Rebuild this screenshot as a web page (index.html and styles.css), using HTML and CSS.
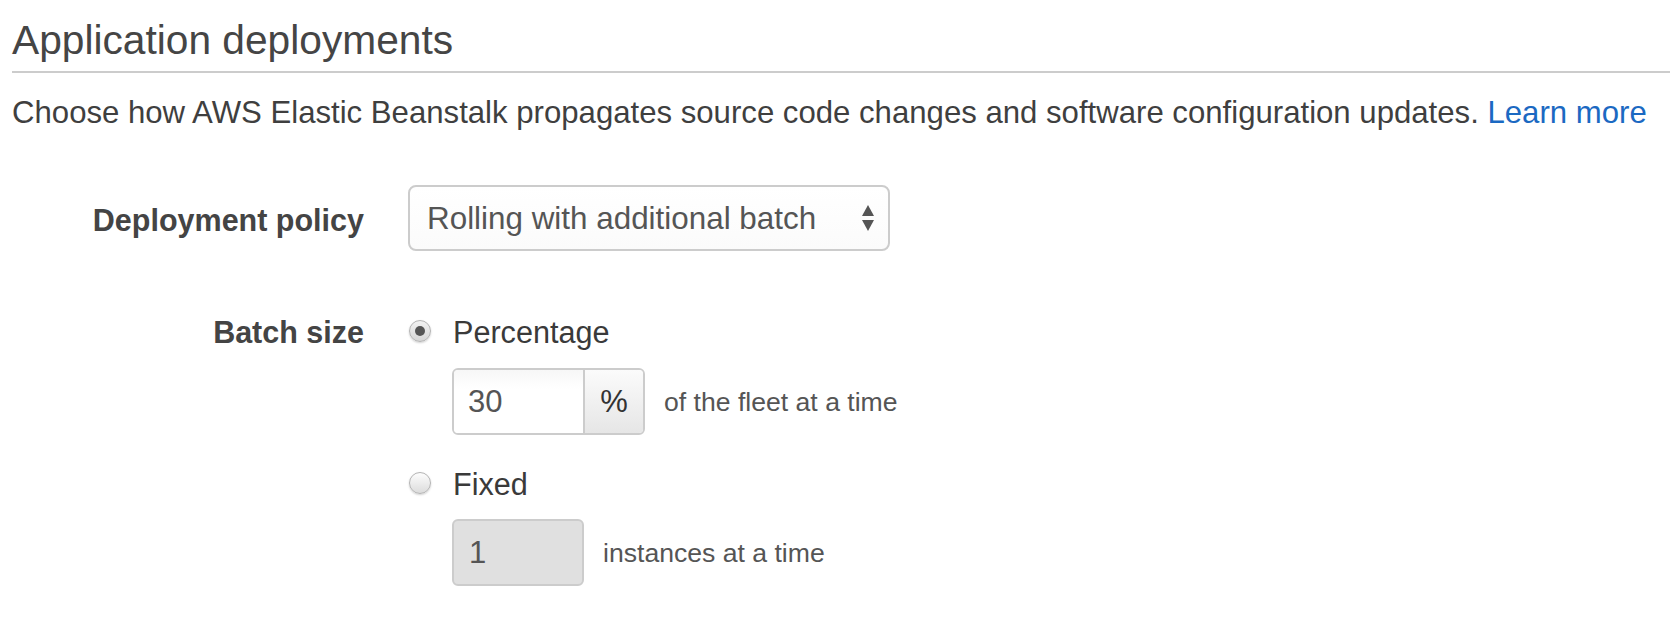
FILE: index.html
```html
<!DOCTYPE html>
<html lang="en">
<head>
<meta charset="utf-8">
<title>Application deployments</title>
<link rel="stylesheet" href="styles.css">
</head>
<body>
<div class="page">
  <h1 class="title">Application deployments</h1>
  <p class="desc">Choose how AWS Elastic Beanstalk propagates source code changes and software configuration updates. <a class="link" href="#">Learn more</a></p>

  <div class="form">
    <div class="row row-policy">
      <div class="label">Deployment policy</div>
      <div class="control">
        <div class="select">
          <span class="select-text">Rolling with additional batch</span>
          <svg class="select-arrows" width="14" height="28" viewBox="0 0 14 28">
            <path d="M7 1 L13 12 L1 12 Z" fill="#555"/>
            <path d="M1 16 L13 16 L7 27 Z" fill="#555"/>
          </svg>
        </div>
      </div>
    </div>

    <div class="row row-batch">
      <div class="label">Batch size</div>
      <div class="control">
        <div class="option">
          <span class="radio checked"><span class="dot"></span></span>
          <span class="option-text">Percentage</span>
        </div>
        <div class="field-line">
          <div class="group">
            <div class="input input-pct">30</div>
            <div class="addon">%</div>
          </div>
          <span class="hint">of the fleet at a time</span>
        </div>
        <div class="option option-fixed">
          <span class="radio"></span>
          <span class="option-text">Fixed</span>
        </div>
        <div class="field-line field-fixed">
          <div class="input input-fixed">1</div>
          <span class="hint">instances at a time</span>
        </div>
      </div>
    </div>
  </div>
</div>
</body>
</html>
```

FILE: styles.css
```css
html, body {
  margin: 0;
  padding: 0;
  background: #ffffff;
}

body {
  font-family: "Liberation Sans", Arial, Helvetica, sans-serif;
  color: #444444;
}

.page {
  padding: 17px 0 0 12px;
}

.title {
  margin: 0;
  font-size: 40.7px;
  line-height: 46px;
  font-weight: normal;
  color: #454545;
  padding-bottom: 8px;
  border-bottom: 2px solid #cccccc;
}

.desc {
  margin: 21px 0 0 0;
  font-size: 31.15px;
  line-height: 38px;
  color: #3f3f3f;
  white-space: nowrap;
}

.link {
  color: #1b69c2;
  text-decoration: none;
}

.form {
  margin-top: 53px;
}

.row {
  display: grid;
  grid-template-columns: 352px auto;
  column-gap: 44px;
}

.row-policy {
  align-items: center;
}

.row-batch {
  margin-top: 63px;
  align-items: start;
}

.label {
  text-align: right;
  font-weight: bold;
  font-size: 30.5px;
  line-height: 36px;
  color: #444444;
}

.row-policy .label {
  padding-top: 3px;
}

.control {
  display: flex;
  flex-direction: column;
  align-items: flex-start;
}

.select {
  box-sizing: border-box;
  width: 482px;
  height: 66px;
  border: 2px solid #cccccc;
  border-radius: 8px;
  background: linear-gradient(#ffffff, #fbfbfb);
  display: flex;
  align-items: center;
  justify-content: space-between;
  padding: 0 13px 0 17px;
}

.select-text {
  font-size: 31.4px;
  line-height: 36px;
  color: #555555;
  padding-top: 2px;
}

.select-arrows {
  display: block;
}

.option {
  display: flex;
  align-items: center;
  height: 36px;
}

.option-fixed {
  margin-top: 31px;
}

.radio {
  box-sizing: border-box;
  width: 22px;
  height: 22px;
  margin-left: 1px;
  margin-right: 22px;
  border-radius: 50%;
  border: 1px solid #b4b4b4;
  background: linear-gradient(#fdfdfd, #dcdcdc);
  box-shadow: 0 1px 2px rgba(0, 0, 0, 0.18);
  display: flex;
  align-items: center;
  justify-content: center;
  margin-top: -2px;
}

.radio.checked {
  background: linear-gradient(#f2f2f2, #d6d6d6);
}

.dot {
  width: 10px;
  height: 10px;
  border-radius: 50%;
  background: #555555;
}

.option-text {
  font-size: 30.6px;
  line-height: 36px;
  color: #3a3a3a;
}

.field-line {
  display: flex;
  align-items: center;
  margin-top: 18px;
  margin-left: 44px;
}

.field-fixed {
  margin-top: 17px;
}

.group {
  display: flex;
  box-sizing: border-box;
  height: 67px;
  border: 2px solid #cccccc;
  border-radius: 6px;
  overflow: hidden;
}

.input {
  box-sizing: border-box;
  font-size: 31px;
  line-height: 36px;
  color: #555555;
  display: flex;
  align-items: center;
}

.input-pct {
  width: 129px;
  height: 100%;
  padding-left: 14px;
  background: linear-gradient(#f7f7f7, #ffffff 30%, #ffffff);
}

.addon {
  box-sizing: border-box;
  width: 60px;
  height: 100%;
  border-left: 2px solid #cccccc;
  background: linear-gradient(#fbfbfb, #e6e6e6);
  display: flex;
  align-items: center;
  justify-content: center;
  font-size: 31px;
  color: #333333;
}

.input-fixed {
  width: 132px;
  height: 67px;
  border: 2px solid #cccccc;
  border-radius: 6px;
  background: #e0e0e0;
  padding-left: 15px;
}

.hint {
  margin-left: 19px;
  font-size: 26.6px;
  line-height: 32px;
  color: #555555;
}
```
